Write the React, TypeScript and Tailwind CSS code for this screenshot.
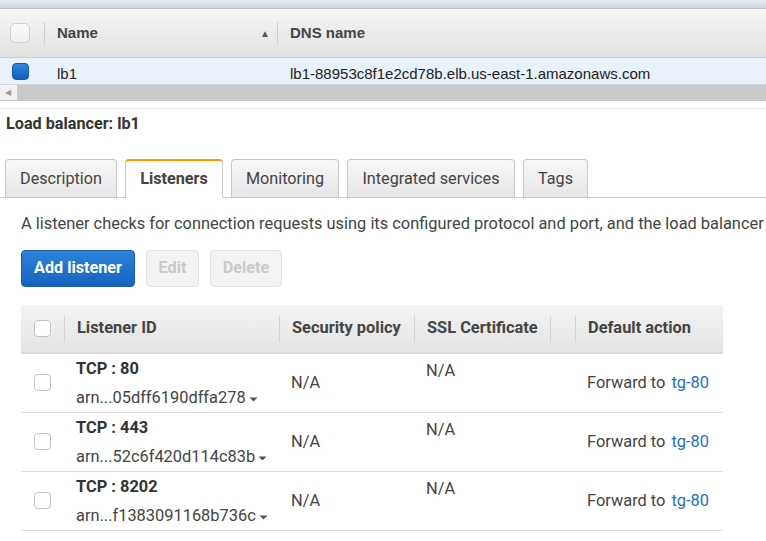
import React from 'react';

const rows = [
  { port: '80', arn: 'arn...05dff6190dffa278' },
  { port: '443', arn: 'arn...52c6f420d114c83b' },
  { port: '8202', arn: 'arn...f1383091168b736c' },
];

const tabs = [
  { label: 'Description', w: 'w-[112px]' },
  { label: 'Listeners', w: 'w-[98px]', active: true },
  { label: 'Monitoring', w: 'w-[108px]' },
  { label: 'Integrated services', w: 'w-[168px]' },
  { label: 'Tags', w: 'w-[65px]' },
];

const Caret = () => (
  <svg width="9" height="5" viewBox="0 0 9 5" className="ml-[3px] mt-[3px]">
    <path d="M0.5 0.5h8l-4 4z" fill="#555" />
  </svg>
);

const Box = () => (
  <div className="w-[17px] h-[17px] rounded-[4px] border border-[#c2c2c2] bg-white" />
);

const HeadCell = ({ w, children, noDivider }: { w: string; children?: React.ReactNode; noDivider?: boolean }) => (
  <div className={`${w} h-full flex items-center`}>
    <div className={`h-[26px] flex items-center pl-[12px] ${noDivider ? '' : 'border-l border-[#d2d2d2]'}`}>
      {children}
    </div>
  </div>
);

export default function App() {
  return (
    <div className="w-[766px] h-[541px] overflow-hidden bg-white font-['Roboto',sans-serif] text-[#444]">
      {/* ELB list */}
      <div className="font-['Liberation_Sans',Arial,sans-serif]">
        <div className="h-[9px] bg-linear-to-b from-[#e6ecf2] to-[#cfd8e1] border-b border-[#c3c3c3]" />
        <div className="h-[49px] flex items-center bg-linear-to-b from-[#f5f5f5] to-[#e2e2e2] border-b border-[#cdcdcd]">
          <div className="w-[44px] flex items-center h-[22px]">
            <div className="ml-[10px] w-[20px] h-[20px] rounded-[5px] border border-[#cfcfcf] bg-linear-to-b from-[#fafafa] to-[#efefef]" />
          </div>
          <div className="w-[233px] h-[22px] flex items-center justify-between border-l border-[#cfcfcf] pl-[12px] pr-[7px]">
            <span className="text-[15px] font-bold text-[#444]">Name</span>
            <span className="text-[10px] text-[#555]">▲</span>
          </div>
          <div className="h-[22px] flex items-center border-l border-[#cfcfcf] pl-[12px]">
            <span className="text-[15px] font-bold text-[#444]">DNS name</span>
          </div>
        </div>
        <div className="h-[26px] flex items-center bg-[#e9f1fb] text-[15px] text-[#222]">
          <div className="w-[44px] flex">
            <div className="ml-[12px] w-[17px] h-[17px] rounded-[4px] bg-linear-to-b from-[#2f86e0] to-[#155fbb] border border-[#1a5aa8]" />
          </div>
          <div className="w-[233px] pl-[13px] pt-[6px]">lb1</div>
          <div className="pl-[13px] pt-[6px]">lb1-88953c8f1e2cd78b.elb.us-east-1.amazonaws.com</div>
        </div>
        <div className="h-[16px] flex border-t border-[#d6d6d6]">
          <div className="w-[17px] bg-[#f1f1f1] flex items-center pl-[5px]">
            <span className="text-[8px] text-[#9a9a9a]">◀</span>
          </div>
          <div className="flex-1 bg-[#c9c9c9]" />
        </div>
        <div className="h-[9px] border-t border-[#c8c8c8] border-b border-b-[#e8e8e8]" />
      </div>

      <div className="mt-[5px] pl-[6px] text-[16.2px] leading-[20px] font-bold text-[#333]">Load balancer: lb1</div>

      {/* tabs */}
      <div className="mt-[25px] flex items-end gap-[8px] pl-[5px] border-b border-[#c8c8c8]">
        {tabs.map((t) =>
          t.active ? (
            <div
              key={t.label}
              className={`${t.w} h-[39px] -mb-px flex items-center justify-center pt-[1px] rounded-t-[4px] border border-[#c8c8c8] border-t-2 border-t-[#ff9900] border-b-white bg-white text-[16.2px] font-bold text-[#444]`}
            >
              {t.label}
            </div>
          ) : (
            <div
              key={t.label}
              className={`${t.w} h-[38px] flex items-center justify-center pt-[2px] rounded-t-[4px] border border-b-0 border-[#c8c8c8] bg-linear-to-b from-[#f7f7f7] to-[#e7e7e7] text-[16.2px] text-[#444]`}
            >
              {t.label}
            </div>
          )
        )}
      </div>

      <div className="mt-[16px] pl-[21px] text-[16.4px] leading-[20px] whitespace-nowrap text-[#444]">
        A listener checks for connection requests using its configured protocol and port, and the load balancer
      </div>

      <div className="mt-[16px] pl-[21px] flex gap-[11px]">
        <button className="w-[114px] h-[37px] rounded-[4px] border border-[#1b5db0] bg-linear-to-b from-[#2c82da] to-[#1663bf] text-white text-[16.2px] font-bold">
          Add listener
        </button>
        <button className="w-[53px] h-[37px] rounded-[4px] border border-[#e2e2e2] bg-[#f3f3f3] text-[#cacaca] text-[16.2px] font-bold">
          Edit
        </button>
        <button className="w-[72px] h-[37px] rounded-[4px] border border-[#e2e2e2] bg-[#f3f3f3] text-[#cacaca] text-[16.2px] font-bold">
          Delete
        </button>
      </div>

      {/* listeners table */}
      <div className="mt-[18px] ml-[21px] w-[702px]">
        <div className="h-[49px] flex bg-linear-to-b from-[#f3f3f3] to-[#e4e4e4] border-b-2 border-[#d9d9d9] text-[16.4px] font-bold text-[#444]">
          <div className="w-[43px] h-full flex items-center pl-[13px]">
            <Box />
          </div>
          <HeadCell w="w-[215px]">Listener ID</HeadCell>
          <HeadCell w="w-[135px]">Security policy</HeadCell>
          <HeadCell w="w-[136px]">SSL Certificate</HeadCell>
          <HeadCell w="w-[25px]" />
          <HeadCell w="w-[148px]">Default action</HeadCell>
        </div>
        {rows.map((r) => (
          <div key={r.port} className="h-[59px] flex border-b border-[#dcdcdc] text-[16.4px] leading-[20px] text-[#444]">
            <div className="w-[43px] flex items-center pl-[13px] pb-[2px]">
              <Box />
            </div>
            <div className="w-[215px] pl-[12px] pt-[5px]">
              <div className="font-bold text-[#333]">TCP : {r.port}</div>
              <div className="mt-[9px] flex items-center">
                {r.arn}
                <Caret />
              </div>
            </div>
            <div className="w-[135px] pl-[12px] flex items-center">N/A</div>
            <div className="w-[136px] pl-[12px] pt-[7px]">N/A</div>
            <div className="w-[25px]" />
            <div className="w-[148px] pl-[12px] flex items-center whitespace-nowrap">
              Forward to<span className="ml-[6px] text-[#1e6fc8]">tg-80</span>
            </div>
          </div>
        ))}
      </div>
    </div>
  );
}
